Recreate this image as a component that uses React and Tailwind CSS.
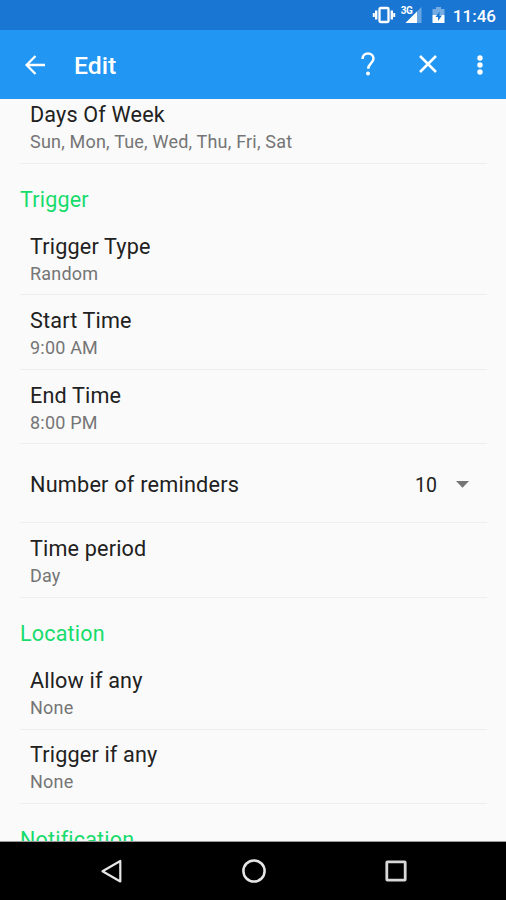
const triggerRows = [
  { title: 'Trigger Type', value: 'Random' },
  { title: 'Start Time', value: '9:00 AM' },
  { title: 'End Time', value: '8:00 PM' },
]

const locationRows = [
  { title: 'Allow if any', value: 'None' },
  { title: 'Trigger if any', value: 'None' },
]

export default function App() {
  return (
    <div className="flex h-[900px] w-[506px] flex-col overflow-hidden bg-[#fafafa] font-['Roboto',sans-serif]">
      <StatusBar />
      <Toolbar />

      {/* Scrolled list */}
      <main className="min-h-0 flex-1 overflow-hidden pl-5 pr-[19px]">
        <div className="-mt-[10px]">
          <Row title="Days Of Week" value="Sun, Mon, Tue, Wed, Thu, Fri, Sat" />
          <SectionTitle>Trigger</SectionTitle>
          {triggerRows.map((r) => <Row key={r.title} {...r} />)}
          <div className="flex h-[79px] items-center border-b border-[#eeeeee] pl-[10px] pr-[18px] pt-[3px] text-[21.7px] text-[#212121]">
            <span className="flex-1 tracking-[0.2px]">Number of reminders</span>
            <span className="pt-px text-[19.5px]">10</span>
            <svg className="ml-[19px] h-[7px] w-[13px]" viewBox="0 0 13 7" fill="#757575"><path d="M0 0h13L6.500 6.800z" /></svg>
          </div>
          <Row title="Time period" value="Day" />
          <SectionTitle>Location</SectionTitle>
          {locationRows.map((r) => <Row key={r.title} {...r} />)}
          <SectionTitle>Notification</SectionTitle>
        </div>
      </main>

      <NavBar />
    </div>
  )
}

function Row({ title, value }) {
  return (
    <div className="h-[74.5px] border-b border-[#eeeeee] pl-[10px] pt-[11.800px]">
      <p className="text-[21.6px] leading-[28px] tracking-[0.17px] text-[#212121]">{title}</p>
      <p className="text-[18px] leading-[25px] tracking-[0.2px] text-[#757575]">{value}</p>
    </div>
  )
}

function SectionTitle({ children }) {
  return <h2 className="h-[57.3px] pt-[22px] text-[21.5px] leading-[28px] tracking-[0.2px] text-[#17dc6c]">{children}</h2>
}

function StatusBar() {
  return (
    <div className="flex h-[30px] shrink-0 items-center justify-end bg-[#1976d2] pr-[10px] text-white">
      {/* vibrate */}
      <svg className="h-[18px] w-[24px]" viewBox="0 0 24 18" fill="none" stroke="#fff">
        <rect x="7.500" y="2" width="9" height="14" rx="1" strokeWidth="2.300" />
        <path d="M4.200 4.500v9M19.800 4.500v9" strokeWidth="2.400" />
        <path d="M1.800 7v4M22.200 7v4" strokeWidth="2" />
      </svg>
      {/* signal */}
      <div className="relative ml-[5px] h-[18px] w-[21px]">
        <span className="absolute left-0 top-0 text-[10px] font-bold leading-[10px] tracking-[-0.5px]">3G</span>
        <svg className="h-full w-full" viewBox="0 0 21 18">
          <path d="M20.500 1v16H4.500z" fill="#fff" opacity=".35" />
          <path d="M16 5.500V17H4.500z" fill="#fff" />
        </svg>
      </div>
      {/* battery */}
      <svg className="ml-[10px] h-[18px] w-[13px]" viewBox="0 0 13 18">
        <path d="M4 1h5v2h3.500v6H.5V3H4z" fill="#fff" opacity=".4" />
        <path d="M.5 9h12v8H.5z" fill="#fff" />
        <path d="M7.500 5.500L3.500 11h2.500v4l4-5.500H7.500z" fill="#1976d2" />
      </svg>
      <span className="ml-[8px] pt-px text-[17px] font-medium leading-[30px]">11:46</span>
    </div>
  )
}

function Toolbar() {
  return (
    <header className="flex h-[69px] shrink-0 items-center bg-[#2196f3] pl-[25px] text-white">
      <svg className="h-[20px] w-[20px]" viewBox="0 0 20 20" fill="none" stroke="#fff" strokeWidth="2.300">
        <path d="M20 10H2M10.500 1L1.600 10l8.900 9" />
      </svg>
      <h1 className="ml-[29px] mt-[3px] flex-1 text-[24.800px] font-medium">Edit</h1>
      <svg className="mb-px h-[24px] w-[14px]" viewBox="0 0 14 24" fill="none" stroke="#fff" strokeWidth="2.500">
        <path d="M1.500 7C1.500 3.500 4 1.500 7 1.500s5.500 2 5.500 5.300c0 4-5.300 4.800-5.300 10" />
        <circle cx="7" cy="21.500" r="2" fill="#fff" stroke="none" />
      </svg>
      <svg className="mb-px ml-[44px] h-[18px] w-[18px]" viewBox="0 0 18 18" fill="none" stroke="#fff" strokeWidth="2.500">
        <path d="M1 1l16 16M17 1L1 17" />
      </svg>
      <svg className="ml-[40px] mr-[23px] h-[20px] w-[6px]" viewBox="0 0 6 20" fill="#fff">
        <circle cx="3" cy="3" r="2.700" />
        <circle cx="3" cy="10" r="2.700" />
        <circle cx="3" cy="17" r="2.700" />
      </svg>
    </header>
  )
}

function NavBar() {
  return (
    <nav className="flex h-[59px] shrink-0 items-center justify-between border-t border-[#999999] bg-black pl-[100px] pr-[99px]">
      <svg className="h-[24px] w-[22px]" viewBox="0 0 22 24" fill="none" stroke="#e6e6e6" strokeWidth="2.200" strokeLinejoin="round">
        <path d="M20.300 2v20.500L2.500 12.200z" />
      </svg>
      <svg className="h-[24px] w-[24px]" viewBox="0 0 24 24" fill="none" stroke="#e6e6e6" strokeWidth="2.500">
        <circle cx="12" cy="12" r="10.600" />
      </svg>
      <svg className="h-[22px] w-[22px]" viewBox="0 0 22 22" fill="none" stroke="#d8d8d8" strokeWidth="2.800">
        <rect x="1.800" y="1.800" width="18.400" height="18.400" rx="0.600" />
      </svg>
    </nav>
  )
}
